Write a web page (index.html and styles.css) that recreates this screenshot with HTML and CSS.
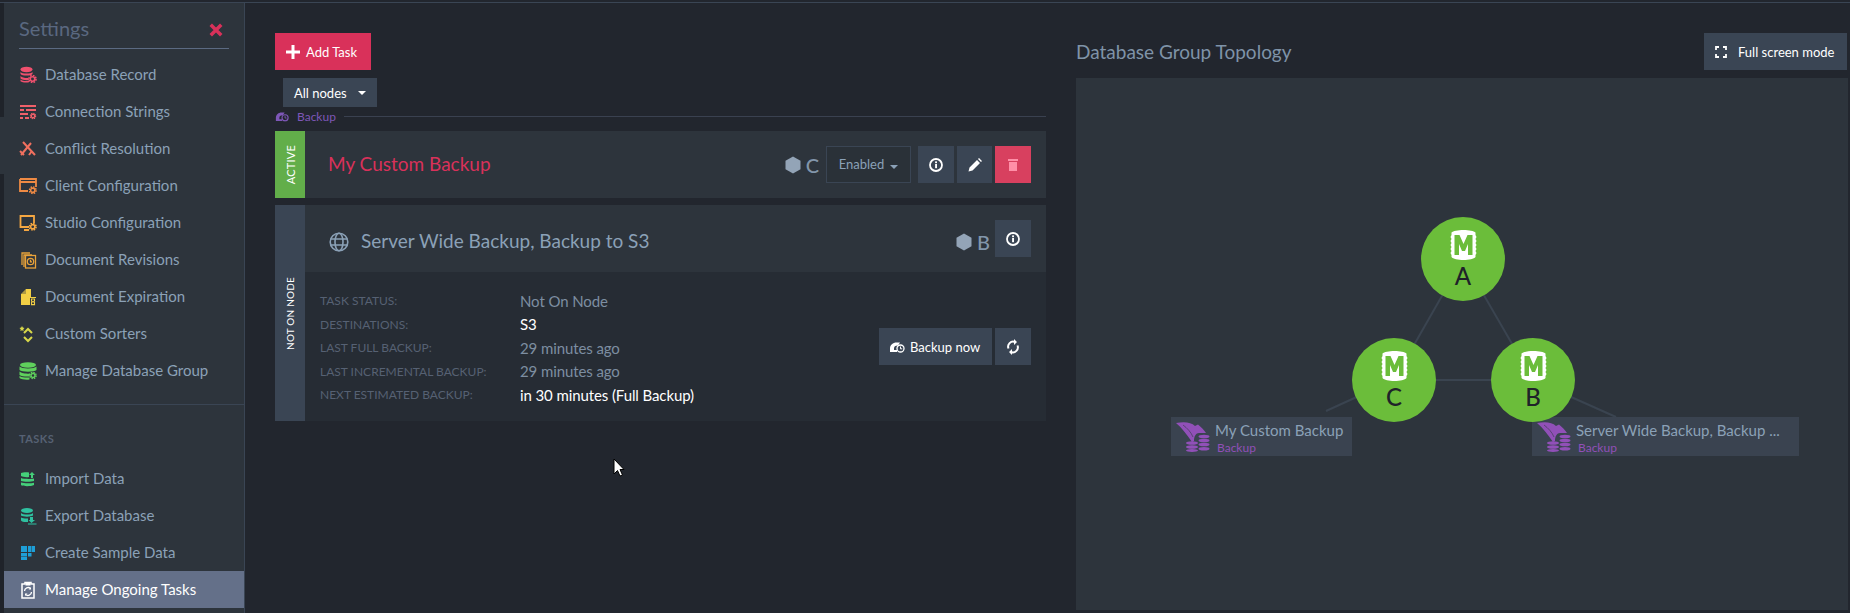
FILE: index.html
```html
<!DOCTYPE html>
<html lang="en">
<head>
<meta charset="utf-8">
<title>Manage Ongoing Tasks</title>
<link rel="stylesheet" href="styles.css">
</head>
<body>
<svg class="defs" width="0" height="0" aria-hidden="true">
  <defs>
    <symbol id="gear" viewBox="0 0 10 10">
      <circle cx="5" cy="5" r="3.9" fill="none" stroke="currentColor" stroke-width="1.8" stroke-dasharray="1.8 1.25"/>
      <circle cx="5" cy="5" r="2.5" fill="none" stroke="currentColor" stroke-width="1.8"/>
    </symbol>
    <symbol id="info" viewBox="0 0 16 16">
      <circle cx="8" cy="8" r="6" fill="none" stroke="currentColor" stroke-width="1.8"/>
      <rect x="7.1" y="7" width="1.9" height="4.2" fill="currentColor"/>
      <rect x="7.1" y="4.4" width="1.9" height="1.8" fill="currentColor"/>
    </symbol>
    <symbol id="hex" viewBox="0 0 16 18">
      <path d="M8 0.5 15.5 4.7v8.6L8 17.5 .5 13.3V4.7z" fill="currentColor"/>
    </symbol>
    <symbol id="cluster" viewBox="0 0 27 30">
      <path d="M13.500 0C19 0 24 1 25.500 2.500V5l1 2-1 2 1 2-1 2 1 2-1 2 1 2-1 2 1 2-1 2v2C24 29 19 30 13.500 30S3 29 1.500 27v-2l-1-2 1-2-1-2 1-2-1-2 1-2-1-2 1-2-1-2 1-2V2.500C3 1 8 0 13.500 0z" fill="#fff"/>
      <path d="M4.500 25V5h5l4 9 4-9h5v20H18V14l-3 7h-3l-3-7v11z" fill="#6bbd3a"/>
    </symbol>
    <symbol id="backup-node" viewBox="0 0 34 30">
      <path d="M0 1C8-.5 15 0 19 4l3-1.500C25 5 28 8 30 11h-7c-3 0-5 3-5 8l-2 1C11 13 6 6 0 1z" fill="#9150b8"/>
      <path d="M7 3c4 3 8 7 10 12" fill="none" stroke="#333b47" stroke-width=".6"/>
      <g fill="#9150b8">
        <ellipse cx="16" cy="21" rx="6" ry="1.700"/><ellipse cx="16" cy="25" rx="6" ry="1.700"/><ellipse cx="16" cy="28.500" rx="6" ry="1.500"/>
        <ellipse cx="28" cy="14.500" rx="5.500" ry="1.800"/><ellipse cx="28" cy="18.500" rx="5.500" ry="1.800"/><ellipse cx="28" cy="22.500" rx="5.500" ry="1.800"/><ellipse cx="28" cy="26.800" rx="5.500" ry="1.800"/>
      </g>
    </symbol>
    <symbol id="backup-small" viewBox="0 0 16 12">
      <path d="M1 10V7.500C1 4 4 1.500 7.500 1.500H11L9 4.500C6 4.500 5 5.500 5 7.500V10z M1 9h7v2H1z" fill="currentColor"/>
      <circle cx="11.500" cy="7.500" r="3.500" fill="none" stroke="currentColor" stroke-width="1.300"/>
      <path d="M11.500 5.500v2.300h1.700" fill="none" stroke="currentColor"/>
    </symbol>
  </defs>
</svg>

<div class="topbar"></div>
<div class="app">
  <div class="gutter"><span class="gutter-notch"></span></div>

  <nav class="sidebar">
    <div class="side-head">
      <span class="side-title">Settings</span>
      <svg class="close" viewBox="0 0 12 12"><path d="M1.500 1.500l9 9M10.500 1.500l-9 9" stroke="currentColor" stroke-width="3"/></svg>
    </div>
    <ul class="menu">
      <li class="item"><svg class="ico c-db" viewBox="0 0 18 18"><g fill="currentColor"><ellipse cx="7.500" cy="3.500" rx="6" ry="2.700"/><path d="M1.500 6c1.500 2 10.500 2 12 0v2c-1.500 2-10.500 2-12 0zM1.500 10c1.500 2 7 2.300 8 1.800l.5 2.200c-3 .5-7 0-8.500-1.500zM1.500 13.500c1.500 1.500 6 1.800 8.500 1.400v1.400c-3 .5-7 .2-8.500-1z"/></g><use href="#gear" x="9" y="8.500" width="9" height="9"/></svg><span>Database Record</span></li>
      <li class="item"><svg class="ico c-conn" viewBox="0 0 18 18"><g fill="currentColor"><rect x="1" y="2" width="16" height="2"/><rect x="1" y="6" width="4" height="2"/><rect x="7" y="6" width="10" height="2"/><rect x="1" y="10" width="8" height="2"/><rect x="1" y="14" width="3" height="2"/><rect x="6" y="14" width="4" height="2"/></g><use href="#gear" x="10.500" y="9.500" width="7" height="7"/></svg><span>Connection Strings</span></li>
      <li class="item"><svg class="ico c-conf" viewBox="0 0 18 18"><g fill="none" stroke="currentColor" stroke-width="2"><path d="M2 15 12 3"/><path d="M4 2 16 15"/><path d="M1 11l4 4M13 11l-3 4"/></g></svg><span>Conflict Resolution</span></li>
      <li class="item"><svg class="ico c-client" viewBox="0 0 18 18"><path d="M1 2h16v8M1 2v12h8M1 5h16" fill="none" stroke="currentColor" stroke-width="1.800"/><use href="#gear" x="9.500" y="9" width="8.500" height="8.500"/></svg><span>Client Configuration</span></li>
      <li class="item"><svg class="ico c-studio" viewBox="0 0 18 18"><path d="M10 13H1.500V2h13.500v7M5 16h5" fill="none" stroke="currentColor" stroke-width="1.800"/><use href="#gear" x="9.500" y="8.500" width="8.500" height="8.500"/></svg><span>Studio Configuration</span></li>
      <li class="item"><svg class="ico c-rev" viewBox="0 0 18 18"><g fill="none" stroke="currentColor" stroke-width="1.300"><path d="M3 14V2h8M5 16V4h8"/><rect x="6.500" y="4.500" width="10" height="12.500"/><circle cx="11.500" cy="10.500" r="3.200"/><path d="M11.500 8.800v2h1.500"/></g></svg><span>Document Revisions</span></li>
      <li class="item"><svg class="ico c-exp" viewBox="0 0 18 18"><path d="M7 1h5v8h5v8H2V6z" fill="currentColor"/><path d="M7 1v5H2z" fill="#2d343c" opacity=".35"/><rect x="11" y="10" width="6" height="7" fill="#2d343c"/><path d="M12.500 11h3v2l-1 .8 1 .8v2h-3v-2l1-.8-1-.8z" fill="none" stroke="currentColor" stroke-width="1.100"/></svg><span>Document Expiration</span></li>
      <li class="item"><svg class="ico c-sort" viewBox="0 0 18 18"><path d="M5 8l4-4 4 4M5 12l4 4 4-4" fill="none" stroke="currentColor" stroke-width="2"/><path d="M3 1l.8 1.600 1.700.4-1.200 1.200.3 1.800L3 5.200 1.400 6l.3-1.800L.5 3l1.700-.4z" fill="currentColor"/></svg><span>Custom Sorters</span></li>
      <li class="item"><svg class="ico c-group" viewBox="0 0 18 18"><g fill="currentColor"><ellipse cx="9" cy="3" rx="8" ry="2.700"/><path d="M.5 4.500c2 2.500 15 2.500 17 0v3.500c-2 2.300-15 2.300-17 0zM.5 9.500c2 2.200 10 2.400 11 2L10.500 14.500C7 14.800 2.500 14.500.5 13zM.5 14c2 1.500 7 1.800 10 1.500v2C7 18 2.500 17.500.5 16z"/></g><use href="#gear" x="10" y="9.500" width="8" height="8"/></svg><span>Manage Database Group</span></li>
    </ul>
    <div class="side-sep"></div>
    <div class="side-label">TASKS</div>
    <ul class="menu">
      <li class="item"><svg class="ico c-imp" viewBox="0 0 18 18"><g fill="currentColor"><path d="M2 3c2-1 6-1 8-.5V7C7 7.500 4 7 2 6zM2 8c2 1 10 1.200 13 .5V11c-3 1-10 1-13 0zM2 12.500c3 1 10 1 13 .2V15c-3 1.500-10 1.500-13 .3z"/><path d="M13 2l3 3h-2v3h-2V5h-2z"/></g></svg><span>Import Data</span></li>
      <li class="item"><svg class="ico c-exp2" viewBox="0 0 18 18"><g fill="currentColor"><ellipse cx="8" cy="3.500" rx="6" ry="2.500"/><path d="M2 6c2 2 10 2 12 0v2.500c-2 1.500-10 1.500-12 0zM2 10.500c2 1 5 1.300 7 1v3.500c-3 .3-6 0-7-1.500z"/><path d="M11 10h3v3h2l-3.500 3L9.500 13h1.500zM9 16.500h8.500v1H9z"/></g></svg><span>Export Database</span></li>
      <li class="item"><svg class="ico c-sample" viewBox="0 0 18 18"><g fill="currentColor"><rect x="2" y="2" width="6" height="6"/><rect x="2" y="9" width="6" height="3.500"/><rect x="2" y="13" width="6" height="3"/><rect x="9" y="2" width="3.500" height="6"/><rect x="13" y="2" width="3" height="6"/><rect x="9" y="9" width="3.500" height="3.500"/></g></svg><span>Create Sample Data</span></li>
      <li class="item is-active"><svg class="ico" viewBox="0 0 18 18"><path d="M3 3h3V1.500h6V3h3v14H3z" fill="none" stroke="currentColor" stroke-width="1.500"/><rect x="6.500" y="2" width="5" height="2.500" fill="currentColor"/><path d="M5.500 10a3.500 3.500 0 0 1 6-2.400M12.500 11a3.500 3.500 0 0 1-6 2.400" fill="none" stroke="currentColor" stroke-width="1.300"/><path d="M12 6v2.500H9.500zM6 15v-2.500h2.500z" fill="currentColor"/></svg><span>Manage Ongoing Tasks</span></li>
    </ul>
  </nav>

  <main class="content">
    <section class="tasks">
      <button class="btn btn-add"><svg class="plus" viewBox="0 0 14 14"><path d="M7 0v14M0 7h14" stroke="currentColor" stroke-width="3"/></svg>Add Task</button>
      <button class="btn btn-filter">All nodes<span class="caret"></span></button>
      <div class="group-title">
        <svg class="group-ico" viewBox="0 0 16 12"><use href="#backup-small"/></svg>
        <span>Backup</span>
        <span class="group-line"></span>
      </div>

      <article class="card">
        <div class="strip strip-active"><span>ACTIVE</span></div>
        <div class="card-body">
          <div class="card-head">
            <h3 class="task-name task-link">My Custom Backup</h3>
            <div class="node-tag"><svg class="hex" viewBox="0 0 16 18"><use href="#hex"/></svg>C</div>
            <button class="btn-state">Enabled<span class="caret caret-dim"></span></button>
            <div class="actions">
              <button class="btn-ico"><svg class="i16" viewBox="0 0 16 16"><use href="#info"/></svg></button>
              <button class="btn-ico tight"><svg class="i16" viewBox="0 0 16 16"><path d="M1.500 14.500l1-4 7.500-7.500 3 3-7.500 7.500z M11 2l1-1 3 3-1 1z" fill="currentColor"/></svg></button>
              <button class="btn-ico danger"><svg class="i16" viewBox="0 0 16 16"><rect x="3" y="2" width="10" height="2" fill="currentColor"/><path d="M4 5h8v9H4z" fill="currentColor"/></svg></button>
            </div>
          </div>
        </div>
      </article>

      <article class="card">
        <div class="strip strip-off"><span>NOT ON NODE</span></div>
        <div class="card-body">
          <div class="card-head">
            <svg class="globe shifted" viewBox="0 0 20 20"><g fill="none" stroke="currentColor" stroke-width="1.600"><circle cx="10" cy="10" r="8.800"/><ellipse cx="10" cy="10" rx="4" ry="8.800"/><path d="M1.500 7h17M1.500 13h17"/></g></svg>
            <h3 class="task-name shifted">Server Wide Backup, Backup to S3</h3>
            <div class="node-tag shifted"><svg class="hex" viewBox="0 0 16 18"><use href="#hex"/></svg>B</div>
            <div class="actions">
              <button class="btn-ico"><svg class="i16" viewBox="0 0 16 16"><use href="#info"/></svg></button>
            </div>
          </div>
          <div class="details">
            <dl class="props">
              <dt>TASK STATUS:</dt><dd>Not On Node</dd>
              <dt>DESTINATIONS:</dt><dd class="bright">S3</dd>
              <dt>LAST FULL BACKUP:</dt><dd>29 minutes ago</dd>
              <dt>LAST INCREMENTAL BACKUP:</dt><dd>29 minutes ago</dd>
              <dt>NEXT ESTIMATED BACKUP:</dt><dd class="bright">in 30 minutes (Full Backup)</dd>
            </dl>
            <div class="detail-actions">
              <button class="btn btn-dark"><svg class="i-backup" viewBox="0 0 16 12"><use href="#backup-small"/></svg>Backup now</button>
              <button class="btn-ico"><svg class="i16" viewBox="0 0 16 16"><path d="M3.500 9.500A5 5 0 0 1 10 3M12.500 6.500A5 5 0 0 1 6 13" fill="none" stroke="currentColor" stroke-width="2"/><path d="M9 0v6l3-3zM7 10v6l-3-3z" fill="currentColor"/></svg></button>
            </div>
          </div>
        </div>
      </article>
    </section>

    <section class="topology">
      <header class="topo-head">
        <h2 class="topo-title">Database Group Topology</h2>
        <button class="btn btn-dark btn-full"><svg class="i-full" viewBox="0 0 12 12"><path d="M1 4V1h3M8 1h3v3M11 8v3H8M4 11H1V8" fill="none" stroke="currentColor" stroke-width="1.800"/></svg>Full screen mode</button>
      </header>
      <div class="canvas">
        <svg class="links" viewBox="0 0 772 532">
          <g stroke="#3a4450" stroke-width="2" fill="none">
            <line x1="387" y1="181" x2="318" y2="302"/>
            <line x1="387" y1="181" x2="457" y2="302"/>
            <line x1="318" y1="302" x2="457" y2="302"/>
            <line x1="318" y1="302" x2="250" y2="333"/>
            <line x1="457" y1="302" x2="540" y2="339"/>
          </g>
        </svg>
        <div class="task-box box-left">
          <svg class="box-ico" viewBox="0 0 34 30"><use href="#backup-node"/></svg>
          <div class="box-text"><div class="box-name">My Custom Backup</div><div class="box-type">Backup</div></div>
        </div>
        <div class="task-box box-right">
          <svg class="box-ico" viewBox="0 0 34 30"><use href="#backup-node"/></svg>
          <div class="box-text"><div class="box-name">Server Wide Backup, Backup ...</div><div class="box-type">Backup</div></div>
        </div>
        <div class="node node-a"><svg class="node-ico" viewBox="0 0 27 30"><use href="#cluster"/></svg><span>A</span></div>
        <div class="node node-c"><svg class="node-ico" viewBox="0 0 27 30"><use href="#cluster"/></svg><span>C</span></div>
        <div class="node node-b"><svg class="node-ico" viewBox="0 0 27 30"><use href="#cluster"/></svg><span>B</span></div>
      </div>
    </section>
  </main>
</div>
<svg class="cursor" viewBox="0 0 12 19"><path d="M1 1v15l3.500-3.500 2.500 5.500 2.500-1-2.500-5.500H11z" fill="#fff" stroke="#000" stroke-width="1"/></svg>
</body>
</html>
```

FILE: styles.css
```css
* { box-sizing: border-box; }
html, body { margin: 0; height: 613px; overflow: hidden; }
body { background: #22262e; font-family: Lato, "Open Sans", sans-serif; font-size: 15px; color: #8ba1b7; position: relative; }
.defs { position: absolute; }
h2, h3, ul, dl, dd { margin: 0; padding: 0; }
ul { list-style: none; }
button { font: inherit; border: 0; padding: 0; cursor: pointer; }

.topbar { height: 3px; border-bottom: 1px solid #3a4554; }
.app { display: flex; height: 610px; }
.gutter { width: 4px; background: #1f232a; position: relative; }
.gutter-notch { position: absolute; left: 0; top: 114px; width: 4px; height: 57px; background: #2d343c; }

.sidebar { width: 241px; background: #2d343c; border-right: 1px solid #3a4554; flex: none; }
.side-head { margin: 0 15px; height: 46px; display: flex; align-items: center; justify-content: space-between; border-bottom: 1px solid #5b6a82; padding: 8px 0 0 0; }
.side-title { font-size: 20px; color: #5a6880; margin-top: -3px; }
.close { width: 14px; height: 14px; color: #d9315a; margin-right: 6px; }
.menu { padding-top: 7px; }
.side-sep + .side-label + .menu { padding-top: 0; }
.item { height: 37px; display: flex; align-items: center; padding-left: 15px; gap: 8px; }
.item span { margin-top: -2px; }
.ico { width: 18px; height: 18px; flex: none; }
.item.is-active { background: #647089; color: #fff; }
.c-db { color: #f0506e; } .c-conn { color: #f0606a; } .c-conf { color: #f0705f; }
.c-client { color: #ee8a44; } .c-studio { color: #f5a742; } .c-rev { color: #e8a23a; }
.c-exp { color: #f2cf45; } .c-sort { color: #d8d84a; } .c-group { color: #5fd05c; }
.c-imp { color: #45d07a; } .c-exp2 { color: #2fc0a0; } .c-sample { color: #1e9fd8; }
.side-sep { height: 1px; background: #3a4554; margin-top: 15px; }
.side-label { height: 55px; padding: 22px 0 0 15px; font-size: 11px; line-height: 24px; color: #566173; letter-spacing: .4px; font-weight: 700; }

.content { flex: 1; display: grid; grid-template-columns: 771px 772px; column-gap: 30px; padding: 30px 2px 3px 30px; min-width: 0; }

.tasks { display: flex; flex-direction: column; align-items: flex-start; }
.btn { display: inline-flex; align-items: center; color: #fff; font-size: 13px; }
.btn-add { background: #d9315a; height: 37px; width: 96px; padding-left: 11px; gap: 6px; }
.plus { width: 14px; height: 14px; }
.btn-filter { background: #3a4554; height: 29px; width: 94px; margin: 8px 0 0 8px; padding-left: 11px; }
.caret { display: inline-block; margin-left: 11px; border-left: 4px solid transparent; border-right: 4px solid transparent; border-top: 4px solid currentColor; }
.caret-dim { margin-left: 6px; color: #8ba1b7; }
.group-title { width: 100%; height: 24px; padding-bottom: 6px; display: flex; align-items: center; font-size: 12px; color: #7e57b8; gap: 8px; }
.group-ico { width: 14px; height: 11px; }
.group-line { flex: 1; height: 1px; background: #3a4150; }

.card { width: 100%; display: flex; background: #2d343c; margin-bottom: 7px; }
.strip { width: 30px; flex: none; display: flex; align-items: center; justify-content: center; color: #fff; font-size: 10px; letter-spacing: .2px; }
.strip span { writing-mode: vertical-rl; transform: rotate(180deg); }
.strip-active { background: #62ae4a; font-size: 11px; }
.strip-off { background: #3a4554; }
.card-body { flex: 1; min-width: 0; }
.card-head { height: 67px; display: flex; align-items: center; padding: 0 15px 0 23px; }
.task-name { flex: 1; font-size: 19px; font-weight: 400; color: #8ba1b7; }
.task-link { color: #d9315a; margin-bottom: 2px; }
.shifted { margin-top: 6px; }
.globe { width: 20px; height: 20px; margin-left: 1px; margin-right: 12px; color: #8ba1b7; flex: none; }
.task-name.shifted { margin-top: 4px; }
.node-tag { display: flex; align-items: center; gap: 5px; font-size: 20px; font-weight: 500; color: #8296ab; margin-right: 5px; }
.hex { width: 16px; height: 18px; color: #93a4b7; }
.btn-state { width: 85px; height: 37px; background: #2a3138; border: 1px solid #3a4554; color: #8ba1b7; font-size: 13px; margin-right: 7px; margin-left: 2px; padding-bottom: 2px; }
.actions { display: flex; gap: 3px; }
.btn-ico { width: 36px; height: 37px; background: #3a4554; color: #fff; display: flex; align-items: center; justify-content: center; flex: none; }
.btn-ico.tight { width: 35px; }
.btn-ico.danger { background: #d8405f; color: #ff8fa8; }
.i16 { width: 16px; height: 16px; }

.details { height: 149px; background: #262c34; padding: 17px 15px 0 15px; display: flex; justify-content: space-between; }
.props { display: grid; grid-template-columns: 200px auto; grid-auto-rows: 23.5px; align-items: center; font-size: 15px; }
.props dt { font-size: 12px; color: #566173; }
.props dd { color: #7d8ea1; letter-spacing: -.1px; }
.props dd.bright { color: #fff; }
.detail-actions { display: flex; gap: 3px; margin-top: 39px; }
.btn-dark { background: #3a4554; height: 37px; }
.detail-actions .btn-dark { width: 113px; padding-left: 10px; gap: 5px; }
.i-backup { width: 16px; height: 12px; }

.topology { display: flex; flex-direction: column; min-width: 0; }
.topo-head { display: flex; justify-content: space-between; height: 45px; padding-right: 1px; }
.topo-title { font-size: 19px; font-weight: 400; color: #7f93a8; padding-top: 7px; }
.btn-full { width: 143px; padding-left: 11px; gap: 11px; }
.i-full { width: 12px; height: 12px; }

.canvas { position: relative; height: 532px; background: #2d343c; }
.links { position: absolute; inset: 0; width: 100%; height: 100%; }
.node { position: absolute; width: 84px; height: 84px; border-radius: 50%; background: #6bbd3a; display: flex; flex-direction: column; align-items: center; padding-top: 13px; color: #1f2329; font-size: 24px; font-weight: 500; line-height: 28px; }
.node span { margin-top: 2px; }
.node-ico { width: 27px; height: 30px; flex: none; }
.node-a { left: 345px; top: 139px; }
.node-c { left: 276px; top: 260px; }
.node-b { left: 415px; top: 260px; }
.task-box { position: absolute; height: 39px; top: 339px; background: #3a4350; display: flex; padding: 5px 0 0 5px; gap: 5px; }
.box-left { left: 95px; width: 181px; }
.box-right { left: 456px; width: 267px; }
.box-ico { width: 34px; height: 30px; flex: none; }
.box-name { font-size: 15px; line-height: 17px; color: #8ba1b7; white-space: nowrap; }
.box-type { font-size: 12px; line-height: 14px; color: #9150b8; margin-left: 2px; margin-top: 2px; }

.cursor { position: absolute; left: 613px; top: 458px; width: 12px; height: 19px; }
```
